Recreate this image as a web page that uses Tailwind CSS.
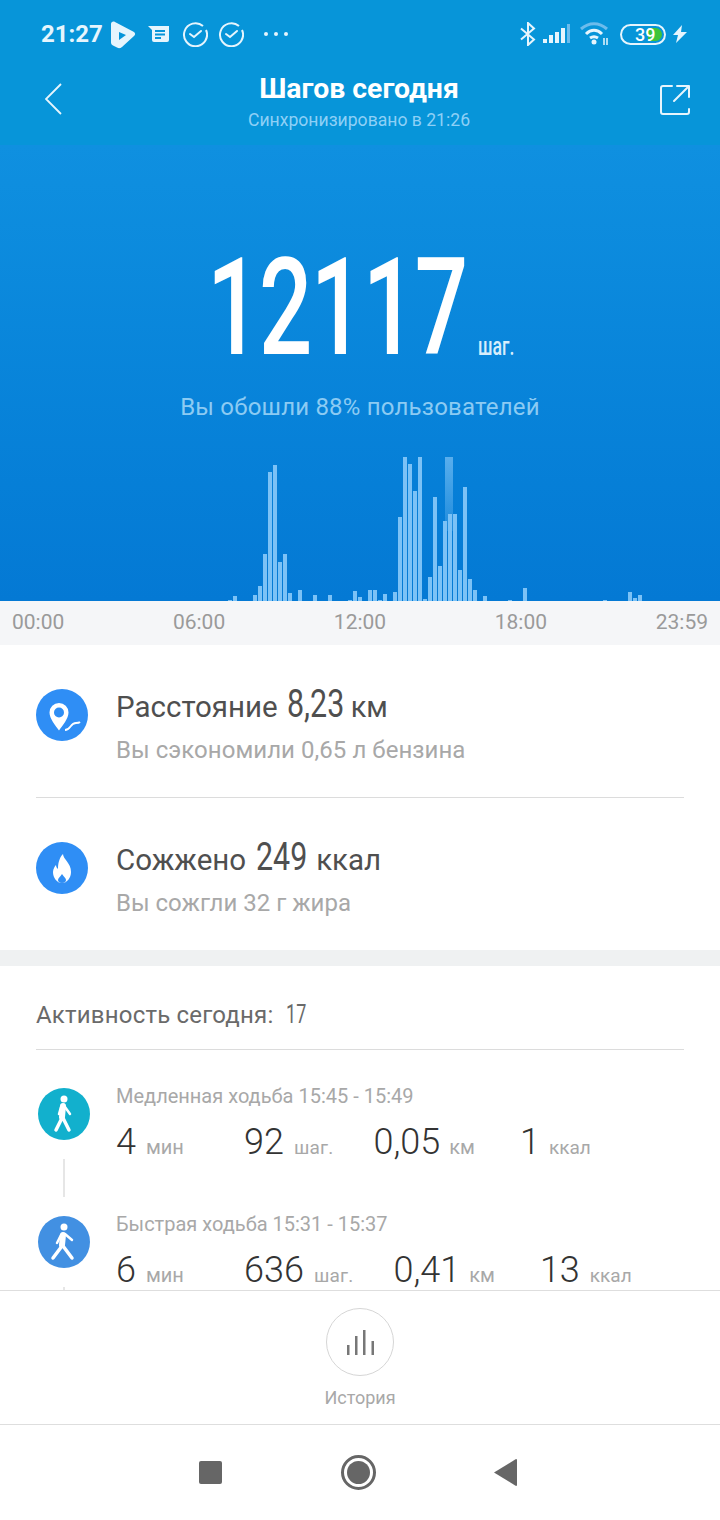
<!DOCTYPE html>
<html lang="en">
<head>
    <meta charset="UTF-8">
    <meta name="viewport" content="width=device-width, initial-scale=1.0">
    <title>Шагов сегодня</title>
    <script src="https://cdn.jsdelivr.net/npm/@tailwindcss/browser@4"></script>
</head>
<body class="font-['Roboto',sans-serif] bg-white">
<div class="w-[720px] h-[1520px] flex flex-col overflow-hidden">

    <!-- blue top -->
    <div class="h-[601px] flex flex-col bg-gradient-to-b from-[#0d92de] to-[#0479d4]">
        <div class="h-[145px] bg-[#0795d9] shrink-0">
            <!-- status bar -->
            <div class="h-[68px] flex items-center pl-[41px] pr-[33px] text-white">
                <span class="text-[24px] font-bold text-[#e6f5fd] w-[69px]">21:27</span>
                <svg class="w-[26px] h-[28px] mt-[1px]" viewBox="0 0 26 28"><path fill="#e6f5fd" d="M1 3c0-2 2-3 4-2l19 10c1.500 1 1.500 3 0 4L12 26c-2 1.500-3 1.500-5 .5l-4-2c-1-.5-2-1.500-2-3z"/><path fill="#0795d9" d="M9 11l7 3-7 5z"/></svg>
                <svg class="w-[22px] h-[20px] ml-[12px]" viewBox="0 0 22 20"><path fill="#e6f5fd" d="M0 2h21v14a2 2 0 0 1-2 2H6a2 2 0 0 1-2-2V6z"/><path stroke="#0795d9" stroke-width="2" d="M7 7h10M7 10.500h10M7 14h6"/></svg>
                <svg class="w-[26px] h-[26px] ml-[12px]" viewBox="0 0 26 26" fill="none" stroke="#e6f5fd" stroke-width="2"><path d="M24 9a11.500 11.500 0 1 1-3-4"/><path d="M8 13l4 3 7-6" stroke-linecap="round"/></svg>
                <svg class="w-[26px] h-[26px] ml-[10px]" viewBox="0 0 26 26" fill="none" stroke="#e6f5fd" stroke-width="2"><path d="M24 9a11.500 11.500 0 1 1-3-4"/><path d="M8 13l4 3 7-6" stroke-linecap="round"/></svg>
                <div class="flex gap-[6px] ml-[20px]">
                    <span class="w-[4px] h-[4px] rounded-full bg-[#e6f5fd]"></span>
                    <span class="w-[4px] h-[4px] rounded-full bg-[#e6f5fd]"></span>
                    <span class="w-[4px] h-[4px] rounded-full bg-[#e6f5fd]"></span>
                </div>
                <div class="flex-1"></div>
                <svg class="w-[16px] h-[24px]" viewBox="0 0 16 24" fill="none" stroke="#e6f5fd" stroke-width="2"><path d="M1 6.500l13 11-6 5.500V1l6 5.500-13 11"/></svg>
                <svg class="w-[28px] h-[20px] ml-[7px]" viewBox="0 0 28 20">
                    <rect x="0" y="15" width="4" height="4" fill="#e6f5fd"/><rect x="6" y="11" width="4" height="8" fill="#e6f5fd"/><rect x="12" y="8" width="4" height="11" fill="#e6f5fd"/><rect x="18" y="4" width="4" height="15" fill="#e6f5fd"/><rect x="24" y="0" width="3" height="19" fill="#6cbcec"/>
                </svg>
                <svg class="w-[30px] h-[24px] ml-[9px]" viewBox="0 0 30 24" fill="none">
                    <path d="M1 7c8-7 18-7 26 0" stroke="#6cbcec" stroke-width="3"/><path d="M6 12c5-5 11-5 16 0" stroke="#e6f5fd" stroke-width="3"/><path d="M10 16c3-2 5-2 8 0" stroke="#e6f5fd" stroke-width="3"/><circle cx="14" cy="20" r="2.500" fill="#e6f5fd"/><path d="M24 16v7M27 16v7" stroke="#e6f5fd" stroke-width="1.500"/>
                </svg>
                <div class="relative w-[46px] h-[21px] ml-[10px] border-2 border-[#e6f5fd] rounded-full p-[2px]">
                    <div class="h-full w-[38px] flex justify-end"><div class="w-[14px] h-full bg-[#3fc43a] rounded-r-full"></div></div>
                    <span class="absolute left-[13px] top-[-4px] text-[18px] leading-[25px] font-medium text-white">39</span>
                </div>
                <svg class="w-[14px] h-[18px] ml-[7px]" viewBox="0 0 14 18" fill="#e6f5fd"><path d="M9 0L0 10h5l-2 8 11-11H8z"/></svg>
            </div>
            <!-- title bar -->
            <div class="flex items-start justify-between pl-[45px] pr-[30px]">
                <svg class="w-[18px] h-[32px] mt-[15px]" viewBox="0 0 18 32" fill="none" stroke="#e6f5fd" stroke-width="1.800"><path d="M16 1L1 16l15 15"/></svg>
                <div class="flex flex-col items-center pt-[5px] -ml-[5px]">
                    <span class="text-[28.400px] leading-[32px] font-bold text-white">Шагов сегодня</span>
                    <span class="text-[17.600px] leading-[24px] mt-[3px] text-[#8ed0f6]">Синхронизировано в 21:26</span>
                </div>
                <svg class="w-[30px] h-[30px] mt-[17px]" viewBox="0 0 30 30" fill="none" stroke="#e6f5fd" stroke-width="2" stroke-linecap="round" stroke-linejoin="round"><path d="M12 1H3a2 2 0 0 0-2 2v24a2 2 0 0 0 2 2h24a2 2 0 0 0 2-2v-3"/><path d="M14 16L28 2M17 1h12v11"/></svg>
            </div>
        </div>

        <!-- step count -->
        <div class="flex-1 flex flex-col bg-gradient-to-b from-[#0f90e0] to-[#0479d4]">
            <div class="flex items-end h-[228px] pl-[207px]">
                <span class="inline-block w-[271px] origin-left scale-x-[0.695] text-[135px] leading-[130px] tracking-[-2px] font-medium text-white whitespace-nowrap">12117</span>
                <span class="inline-block w-[36px] mb-[14px] origin-left scale-x-[0.68] text-[26px] leading-[26px] font-medium text-[#d8eefc] whitespace-nowrap">шаг.</span>
            </div>
            <p class="text-center text-[24px] tracking-[0.2px] leading-[30px] mt-[19px] text-[#8ccbf3]">Вы обошли 88% пользователей</p>
            <div id="chart" class="relative flex-1 flex items-end gap-px pl-[3px]"></div>
        </div>
    </div>

    <!-- time axis -->
    <div class="h-[44px] bg-[#f5f6f8] flex items-center justify-between px-[12px] text-[21px] text-[#9a9a9a]">
        <span>00:00</span><span>06:00</span><span>12:00</span><span>18:00</span><span>23:59</span>
    </div>

    <!-- distance, calories -->
    <div class="h-[305px] px-[36px] border-b-[16px] border-[#eff1f2] box-content">
        <div class="h-[153px] flex items-start border-b border-[#dcdcdc] gap-[28px]">
            <div class="w-[52px] h-[52px] mt-[44px] rounded-full bg-[#2f8ef5] flex items-center justify-center shrink-0">
                <svg class="w-[32px] h-[36px] overflow-visible" viewBox="0 0 32 36"><path fill="#fff" d="M13 6a9.500 9.500 0 0 0-9.500 9.500c0 6 6 13 9.500 18 3.500-5 9.500-12 9.500-18A9.500 9.500 0 0 0 13 6z"/><circle cx="13" cy="15.500" r="5" fill="#2f8ef5"/><path d="M19 33c5 0 6-7 11-7" fill="none" stroke="#2f8ef5" stroke-width="6"/><path d="M19 33c6 0 5-7 11-7 2 0 3 0 4-1" fill="none" stroke="#fff" stroke-width="1.800"/></svg>
            </div>
            <div class="flex flex-col pt-[37px]">
                <div class="flex items-baseline text-[29.500px] leading-[44px] text-[#4f4f4f]">
                    <span>Расстояние</span>
                    <span class="inline-block w-[57px] ml-[9px] origin-left scale-x-[0.8] text-[38px] whitespace-nowrap">8,23</span>
                    <span class="ml-[7px] text-[29px]">км</span>
                </div>
                <span class="text-[24px] tracking-[0.05px] leading-[30px] mt-[6px] text-[#a8a8a8]">Вы сэкономили 0,65 л бензина</span>
            </div>
        </div>
        <div class="h-[152px] flex items-start gap-[28px]">
            <div class="w-[52px] h-[52px] mt-[44px] rounded-full bg-[#2f8ef5] flex items-center justify-center shrink-0">
                <svg class="w-[18px] h-[29px]" viewBox="0 0 18 29"><path fill="#fff" d="M10 0c0 5 8 9 8 18 0 6-4 11-9 11S0 24 0 18c0-3 2-6 3-7 0 2 1 3 2 4 0-5 1-11 5-15z"/><path fill="#2f8ef5" d="M9 29c-3 0-4-2-4-3 0-2 2-3 4-6 2 3 4 4 4 6 0 1-1 3-4 3z"/></svg>
            </div>
            <div class="flex flex-col pt-[37px]">
                <div class="flex items-baseline text-[29.500px] leading-[44px] text-[#4f4f4f]">
                    <span>Сожжено</span>
                    <span class="inline-block w-[52px] ml-[10px] origin-left scale-x-[0.8] text-[38px] whitespace-nowrap">249</span>
                    <span class="ml-[8px]">ккал</span>
                </div>
                <span class="text-[24px] leading-[30px] mt-[6px] text-[#a8a8a8]">Вы сожгли 32 г жира</span>
            </div>
        </div>
    </div>

    <!-- activity list -->
    <div class="h-[324px] px-[36px] overflow-hidden">
        <div class="h-[84px] flex items-center pt-[14px] border-b border-[#dcdcdc] text-[24px] tracking-[0.2px] text-[#6a6a6a]">
            <span>Активность сегодня:</span>
            <span class="inline-block w-[19px] ml-[13px] origin-left scale-x-[0.72] text-[25px] whitespace-nowrap">17</span>
        </div>

        <div class="flex h-[128px] pt-[38px] relative">
            <div class="w-[52px] h-[52px] ml-[2px] rounded-full bg-[#12b0cd] flex items-center justify-center shrink-0">
                <svg class="w-[24px] h-[38px]" viewBox="0 0 24 38" fill="none" stroke="#fff" stroke-linecap="round" stroke-linejoin="round"><circle cx="12" cy="4" r="3.500" fill="#fff" stroke="none"/><path d="M11 11l-1 11" stroke-width="6"/><path d="M10 23L4 35M11 23l6 12" stroke-width="3.500"/><path d="M9 12L7 19M13 12l5 7" stroke-width="2.500"/></svg>
            </div>
            <div class="absolute left-[27px] top-[109px] w-[2px] h-[38px] bg-[#e6e6e6]"></div>
            <div class="ml-[26px] flex flex-col -mt-[6px]">
                <span class="text-[20px] leading-[28px] text-[#a8a8a8]">Медленная ходьба 15:45 - 15:49</span>
                <div class="flex items-baseline mt-[10px] leading-[44px]">
                    <div class="w-[128px] flex items-baseline"><span class="text-[36px] font-light text-[#333]">4</span><span class="ml-[10px] text-[20px] text-[#a8a8a8]">мин</span></div>
                    <div class="flex items-baseline"><span class="text-[36px] font-light text-[#333]">92</span><span class="ml-[10px] text-[19px] tracking-[0.2px] text-[#a8a8a8]">шаг.</span></div>
                    <div class="flex items-baseline ml-[40px]"><span class="text-[36px] font-light text-[#333]">0,05</span><span class="ml-[9px] text-[20px] text-[#a8a8a8]">км</span></div>
                    <div class="flex items-baseline ml-[45px]"><span class="text-[36px] font-light text-[#333]">1</span><span class="ml-[9px] text-[19px] text-[#a8a8a8]">ккал</span></div>
                </div>
            </div>
        </div>

        <div class="flex h-[128px] pt-[38px] relative">
            <div class="w-[52px] h-[52px] ml-[2px] rounded-full bg-[#4290e2] flex items-center justify-center shrink-0">
                <svg class="w-[28px] h-[38px]" viewBox="0 0 28 38" fill="none" stroke="#fff" stroke-linecap="round" stroke-linejoin="round"><circle cx="14" cy="4" r="3.500" fill="#fff" stroke="none"/><path d="M13 12l-1 10" stroke-width="6"/><path d="M12 23L3 35M13 23l9 12" stroke-width="3.500"/><path d="M11 12L7 20M15 11l7 6" stroke-width="2.500"/></svg>
            </div>
            <div class="absolute left-[27px] top-[109px] w-[2px] h-[38px] bg-[#e6e6e6]"></div>
            <div class="ml-[26px] flex flex-col -mt-[6px]">
                <span class="text-[20px] leading-[28px] text-[#a8a8a8]">Быстрая ходьба 15:31 - 15:37</span>
                <div class="flex items-baseline mt-[10px] leading-[44px]">
                    <div class="w-[128px] flex items-baseline"><span class="text-[36px] font-light text-[#333]">6</span><span class="ml-[10px] text-[20px] text-[#a8a8a8]">мин</span></div>
                    <div class="flex items-baseline"><span class="text-[36px] font-light text-[#333]">636</span><span class="ml-[10px] text-[19px] tracking-[0.2px] text-[#a8a8a8]">шаг.</span></div>
                    <div class="flex items-baseline ml-[40px]"><span class="text-[36px] font-light text-[#333]">0,41</span><span class="ml-[9px] text-[20px] text-[#a8a8a8]">км</span></div>
                    <div class="flex items-baseline ml-[45px]"><span class="text-[36px] font-light text-[#333]">13</span><span class="ml-[10px] text-[19px] text-[#a8a8a8]">ккал</span></div>
                </div>
            </div>
        </div>
    </div>

    <!-- history button -->
    <div class="h-[135px] border-y border-[#dedede] flex flex-col items-center pt-[17px]">
        <div class="w-[68px] h-[68px] rounded-full border border-[#d6d6d6] flex items-center justify-center">
            <svg class="w-[27px] h-[25px]" viewBox="0 0 27 25" fill="#777"><rect x="0" y="15" width="2.500" height="10"/><rect x="8" y="6" width="2.500" height="19"/><rect x="16" y="0" width="2.500" height="25"/><rect x="24.500" y="11" width="2.500" height="14"/></svg>
        </div>
        <span class="mt-[10px] text-[18px] leading-[24px] text-[#a8a8a8]">История</span>
    </div>

    <!-- nav bar -->
    <div class="flex-1 flex items-center justify-between pl-[199px] pr-[203px]">
        <div class="w-[23px] h-[23px] rounded-[2px] bg-[#666]"></div>
        <div class="w-[35px] h-[35px] rounded-full border-[3px] border-[#666] p-[3px]"><div class="w-full h-full rounded-full bg-[#666]"></div></div>
        <svg class="w-[23px] h-[27px]" viewBox="0 0 23 27" fill="#666"><path d="M0 13.500L22 0a1 1 0 0 1 1 1v25a1 1 0 0 1-1 1z"/></svg>
    </div>
</div>

<script>
    // bar heights by 5px slot
    var bars = {46:1,47:5,51:6,52:15,53:47,54:129,55:136,56:39,57:47,58:8,60:11,63:6,66:6,70:1,71:10,72:4,74:11,75:11,76:1,77:7,79:9,80:84,81:144,82:137,83:110,84:144,85:2,86:24,87:104,88:35,89:80,90:87,91:87,92:31,93:114,94:22,95:11,97:5,102:1,105:13,121:1,126:9,127:3,128:6};
    var chart = document.getElementById("chart");
    for (var k = 1; k < 144; k++) {
        var bar = document.createElement("div");
        bar.className = "w-1 shrink-0 bg-[#7cc2f6]";
        bar.style.height = (bars[k] || 0) + "px";
        chart.appendChild(bar);
    }
    // the blurred bar, caught mid animation
    var ghost = document.createElement("div");
    ghost.className = "absolute left-[445px] bottom-[70px] w-[8px] h-[74px] bg-gradient-to-b from-[#7cc2f6]/70 to-[#7cc2f6]/20";
    chart.appendChild(ghost);
</script>
</body>
</html>
